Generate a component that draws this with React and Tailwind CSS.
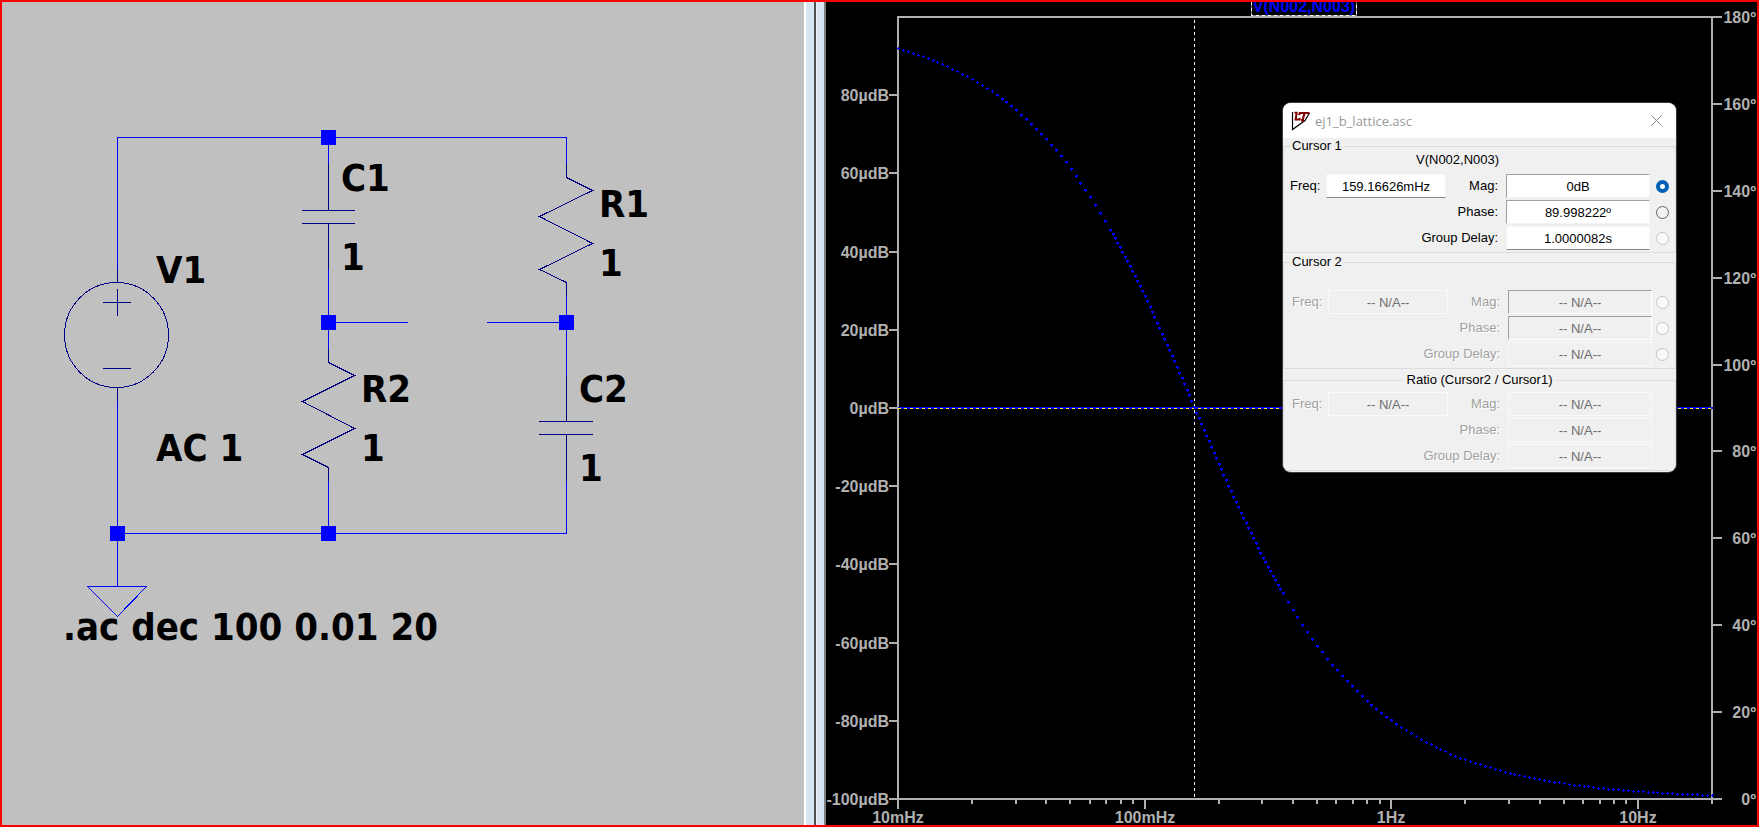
import React from 'react';

const WIRE = '#0000ff';
const PART = '#000080';
const AXIS = '#b0b0b0';

/* ---------- Schematic ---------- */

const wires = [
  'M117 270V137H566V164',
  'M328 137V164',
  'M328 268V349',
  'M328 322H407',
  'M487 322H566',
  'M566 295V376',
  'M566 480V533H117',
  'M328 480V533',
  'M117 400V586',
  'M87 586H146L117 616Z',
];

const parts = [
  'M117 270V282M117 387V400M103 302H130M117 289V315M103 368H130',
  'M328 164V210M302 210H354M302 223H354M328 223V268',
  'M566 376V421M539 421H592M539 434H592M566 434V480',
  'M328 349V362L354 375L302 401L354 428L302 454L328 467V480',
  'M566 164V177L592 190L539 216L592 243L539 269L566 282V295',
];

const nodes = [
  [328, 137],
  [328, 322],
  [566, 322],
  [117, 533],
  [328, 533],
];

const captions = [
  [156, 283, 'V1'],
  [156, 461, 'AC 1'],
  [341, 191, 'C1'],
  [341, 270, '1'],
  [599, 217, 'R1'],
  [599, 276, '1'],
  [361, 402, 'R2'],
  [361, 461, '1'],
  [579, 402, 'C2'],
  [579, 481, '1'],
  [63, 640, '.ac dec 100 0.01 20'],
];

function Schematic() {
  return (
    <svg viewBox="2 2 802 823" className="block h-full w-full" role="img" aria-label="Schematic">
      <g
        fill="none"
        strokeWidth="1"
        strokeLinecap="square"
        shapeRendering="crispEdges"
        transform="translate(0.5 0.5)"
      >
        <g stroke={WIRE}>
          {wires.map((d) => (
            <path key={d} d={d} />
          ))}
        </g>
        <g stroke={PART}>
          {parts.map((d) => (
            <path key={d} d={d} />
          ))}
          <ellipse cx="116" cy="334.5" rx="52" ry="52.5" />
        </g>
      </g>
      {nodes.map(([x, y]) => (
        <rect key={`${x}-${y}`} x={x - 7} y={y - 7} width="15" height="15" fill={WIRE} />
      ))}
      <g className="font-['DejaVu_Sans_Condensed','DejaVu_Sans',sans-serif] text-[38px] font-bold" fill="#000">
        {captions.map(([x, y, text]) => (
          <text key={`${x}-${y}`} x={x} y={y}>
            {text}
          </text>
        ))}
      </g>
    </svg>
  );
}

/* ---------- Bode plot ---------- */

const LEFT = 898;
const RIGHT = 1712;
const TOP = 17;
const BOTTOM = 799;
const DECADE = (RIGHT - LEFT) / Math.log10(2000);

const xOf = (hz) => Math.round(LEFT + DECADE * Math.log10(hz / 0.01));
const yOfPhase = (deg) => Math.round(BOTTOM - (deg * (BOTTOM - TOP)) / 180);
const yOfGain = (udb) => Math.round(BOTTOM - ((udb + 100) * (BOTTOM - TOP)) / 200);

const gains = [80, 60, 40, 20, 0, -20, -40, -60, -80, -100];
const phases = [180, 160, 140, 120, 100, 80, 60, 40, 20, 0];
const majors = [
  [0.01, '10mHz'],
  [0.1, '100mHz'],
  [1, '1Hz'],
  [10, '10Hz'],
];
const minors = [0.01, 0.1, 1]
  .flatMap((d) => [2, 3, 4, 5, 6, 7, 8, 9].map((n) => n * d))
  .concat([2, 3, 4, 5, 6, 7, 8, 9].map((n) => n))
  .filter((hz, i, all) => all.indexOf(hz) === i)
  .concat([20]);

function phaseDots() {
  let d = '';
  let lastX = -100;
  let lastY = -100;
  for (let i = 0; i <= 330; i += 1) {
    const hz = 0.01 * 10 ** (i / 100);
    const x = LEFT + (DECADE * i) / 100;
    const phase = 180 - (2 * Math.atan(2 * Math.PI * hz) * 180) / Math.PI;
    const y = BOTTOM - (phase * (BOTTOM - TOP)) / 180;
    if (Math.hypot(x - lastX, y - lastY) < 4.9) continue;
    const steep = i > 0 && Math.abs(y - lastY) > Math.abs(x - lastX) * 0.7;
    lastX = x;
    lastY = y;
    const px = Math.round(x);
    const py = Math.round(y);
    d += steep
      ? `M${px - 1} ${py - 1}h3v2h-3zM${px} ${py - 1}h1v3h-1z`
      : `M${px - 1} ${py}h3v1h-3zM${px} ${py - 1}h1v3h-1z`;
  }
  return d;
}

function BodePlot() {
  return (
    <svg viewBox="826 2 931 823" className="block h-full w-full" role="img" aria-label="Bode plot">
      <g className="font-['Liberation_Sans',Arial,sans-serif] text-[16px] font-bold">
        <text x="1304" y="12" textAnchor="middle" fill={WIRE}>
          V(N002,N003)
        </text>
        <g fill={AXIS}>
          {gains.map((g) => (
            <text key={g} x="889" y={yOfGain(g) + 6} textAnchor="end">
              {g}µdB
            </text>
          ))}
          {phases.map((p) => (
            <text key={p} x="1756" y={yOfPhase(p) + 6} textAnchor="end">
              {p}º
            </text>
          ))}
          {majors.map(([hz, name]) => (
            <text key={name} x={xOf(hz)} y="823" textAnchor="middle">
              {name}
            </text>
          ))}
        </g>
      </g>
      <g fill="none" shapeRendering="crispEdges">
        <path d="M1251.5 2V15.5H1356.5V2" stroke="#808080" />
        <path d="M1251.5 2V15.5H1356.5V2" stroke="#fff" strokeDasharray="3 3" />
        <g stroke={AXIS} strokeWidth="2">
          <path d={`M${LEFT} ${TOP}H1722M${LEFT} ${TOP - 1}V809M${RIGHT} ${TOP}V804M889 ${BOTTOM}H1722`} />
          {gains.slice(0, -1).map((g) => (
            <path key={g} d={`M889 ${yOfGain(g)}H${LEFT}`} />
          ))}
          {phases.map((p) => (
            <path key={p} d={`M${RIGHT} ${yOfPhase(p)}H1722`} />
          ))}
          {majors.map(([hz]) => (
            <path key={hz} d={`M${xOf(hz)} ${BOTTOM}V809`} />
          ))}
          {minors.map((hz) => (
            <path key={hz} d={`M${xOf(hz)} ${BOTTOM}V804`} />
          ))}
        </g>
        <path d={`M${LEFT} 408H${RIGHT + 1}`} stroke={WIRE} strokeWidth="2" />
        <path d={`M${LEFT} 408.5H${RIGHT}`} stroke="#ffff00" strokeDasharray="3 3" />
        <path d="M1194.5 20V798" stroke="#fff" strokeDasharray="3 3" />
        <path d={phaseDots()} fill={WIRE} />
      </g>
    </svg>
  );
}

/* ---------- Cursor window ---------- */

const fieldBase = 'block h-6 min-w-0 border text-center text-[13px] leading-4 outline-none';
const fieldLook = {
  flat: 'border-[#f6f6f6] border-b-[#868686] bg-white text-black',
  sunken: 'border-[#f4f4f4] border-t-[#a0a0a0] border-l-[#a0a0a0] bg-white text-black',
  flatOff: 'border-[#fafafa] bg-[#f0f0f0] text-[#6d6d6d]',
  sunkenOff: 'border-white border-t-[#a0a0a0] border-l-[#a0a0a0] bg-[#f0f0f0] text-[#6d6d6d]',
};

function Field({ id, value, look, width, off }) {
  return (
    <input
      id={id}
      type="text"
      readOnly
      disabled={off}
      defaultValue={value}
      className={`${fieldBase} ${fieldLook[look]} ${width}`}
    />
  );
}

function Caption({ htmlFor, off, className, children }) {
  const tone = off ? 'text-[#a0a0a0] [text-shadow:1px_1px_0_#fff]' : 'text-black';
  return (
    <label htmlFor={htmlFor} className={`${tone} ${className}`}>
      {children}
    </label>
  );
}

function Readout({ id, freq, rows, off, radios }) {
  return (
    <div className={`flex flex-col gap-0.5 ${off ? 'pl-2' : 'pl-1.5'} ${radios ? 'pr-1.5' : 'pr-[23px]'}`}>
      {rows.map((row, i) => (
        <div key={row.name} className="flex h-6 items-center">
          {i === 0 && (
            <>
              <Caption htmlFor={`${id}-freq`} off={off} className="w-9 shrink-0">
                Freq:
              </Caption>
              <Field id={`${id}-freq`} value={freq} look={off ? 'flatOff' : 'flat'} width="w-[120px]" off={off} />
            </>
          )}
          <Caption htmlFor={`${id}-${i}`} off={off} className="flex-1 pr-2 text-right">
            {row.name}
          </Caption>
          <Field id={`${id}-${i}`} value={row.value} look={row.look} width="w-36" off={off} />
          {radios && (
            <input
              type="radio"
              name={id}
              aria-label={row.name}
              defaultChecked={row.checked}
              disabled={off || row.locked}
              className={`${off ? 'ml-1' : 'ml-1.5'} size-[13px] shrink-0 appearance-none rounded-full border border-[#626262] bg-[#f3f3f3] checked:border-4 checked:border-[#005fb8] checked:bg-white disabled:border-[#c4c4c4] disabled:bg-[#f9f9f9]`}
            />
          )}
        </div>
      ))}
    </div>
  );
}

const NA = '-- N/A--';
const naRows = (look) => [
  { name: 'Mag:', value: NA, look },
  { name: 'Phase:', value: NA, look },
  { name: 'Group Delay:', value: NA, look: 'flatOff' },
];

function CursorWindow() {
  return (
    <section
      aria-label="ej1_b_lattice.asc"
      className="absolute top-[101px] right-[81px] w-[393px] overflow-hidden rounded-lg bg-[#f0f0f0] pb-px font-['Liberation_Sans',Arial,sans-serif] text-[13px] leading-4 text-black ring-1 ring-[#3c3c3c]"
    >
      <header className="flex h-[35px] items-center bg-white pr-3.5 pl-2">
        <svg viewBox="0 0 20 20" className="size-5 shrink-0" aria-hidden="true">
          <path d="M1.5 1V18.5L14 9.5L18.5 2" fill="#fff" stroke="#000" strokeWidth="1.2" />
          <path d="M3.5 1.7H6.5M5.8 1.5L4.6 8.6H8.6L9 7" fill="none" stroke="#800000" strokeWidth="2" />
          <path d="M8 4L8.8 2H18.5M13.6 2L11.6 9M10 9.3H13" fill="none" stroke="#800000" strokeWidth="2.2" />
        </svg>
        <h1 className="ml-1 flex-1 font-['Open_Sans','Noto_Sans',sans-serif] text-[13px] text-[#999999]">
          ej1_b_lattice.asc
        </h1>
        <button type="button" aria-label="Close" className="text-[#8a8a8a]">
          <svg viewBox="0 0 11 11" className="block size-[11px]" fill="none" stroke="currentColor">
            <path d="M0.5 0.5L10.5 10.5M10.5 0.5L0.5 10.5" />
          </svg>
        </button>
      </header>

      <fieldset className="border border-[#dcdcdc] pb-0.5">
        <legend className="ml-1.5 px-0.5">Cursor 1</legend>
        <p className="pb-2 pl-[132px] leading-3">V(N002,N003)</p>
        <Readout
          id="cursor1"
          freq="159.16626mHz"
          radios
          rows={[
            { name: 'Mag:', value: '0dB', look: 'sunken', checked: true },
            { name: 'Phase:', value: '89.998222º', look: 'sunken' },
            { name: 'Group Delay:', value: '1.0000082s', look: 'flat', locked: true },
          ]}
        />
      </fieldset>

      <fieldset className="mt-px border border-[#dcdcdc] pt-5 pb-0.5">
        <legend className="ml-1.5 px-0.5">Cursor 2</legend>
        <Readout id="cursor2" freq={NA} off radios rows={naRows('sunkenOff')} />
      </fieldset>

      <fieldset className="mt-[3px] border border-[#dcdcdc] pt-1 pb-0.5">
        <legend className="mx-auto px-1">Ratio (Cursor2 / Cursor1)</legend>
        <Readout id="ratio" freq={NA} off rows={naRows('flatOff')} />
      </fieldset>
    </section>
  );
}

export default function App() {
  return (
    <main className="flex h-screen overflow-hidden border-2 border-[#ff0000] bg-black">
      <div className="min-w-0 flex-[802] bg-[#c0c0c0]">
        <Schematic />
      </div>
      <div className="flex shrink-0">
        <div className="w-2.5 border-l-2 border-white bg-[#d7e4f2]" />
        <div className="w-0.5 bg-[#505050]" />
        <div className="w-2.5 border-r-2 border-l border-r-[#808080] border-l-[#f0f0f0] bg-[#d7e4f2]" />
      </div>
      <div className="relative min-w-0 flex-[931] bg-black">
        <BodePlot />
        <CursorWindow />
      </div>
    </main>
  );
}
